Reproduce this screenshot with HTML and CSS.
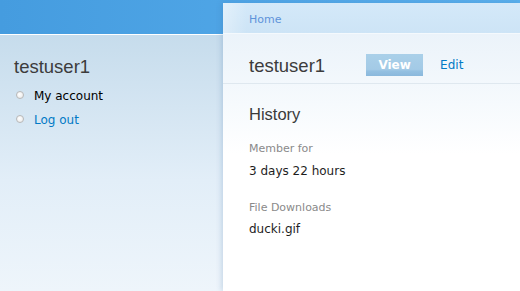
FILE: index.html
```html
<!DOCTYPE html>
<html>
<head>
<meta charset="utf-8">
<link rel="stylesheet" href="styles.css">
</head>
<body>
<div class="page">
  <aside class="sidebar">
    <h2 class="block-title">testuser1</h2>
    <ul class="menu">
      <li class="menu-item">My account</li>
      <li class="menu-item"><a class="link" href="#">Log out</a></li>
    </ul>
  </aside>
  <main class="panel">
    <div class="breadcrumb"><a class="crumb" href="#">Home</a></div>
    <div class="content">
      <div class="title-row">
        <h1 class="page-title">testuser1</h1>
        <nav class="tabs">
          <a class="tab tab-active" href="#">View</a>
          <a class="tab" href="#">Edit</a>
        </nav>
      </div>
      <div class="profile">
        <h3 class="section-title">History</h3>
        <div class="label label-first">Member for</div>
        <div class="value">3 days 22 hours</div>
        <div class="label">File Downloads</div>
        <div class="value value-last">ducki.gif</div>
      </div>
    </div>
  </main>
</div>
</body>
</html>
```

FILE: styles.css
```css
* { box-sizing: border-box; }
html, body { margin: 0; padding: 0; }
body {
  font-family: "DejaVu Sans", Verdana, sans-serif;
  font-size: 12px;
  color: #1a1a1a;
  background: #eef5fb;
}
a { text-decoration: none; }

.page {
  display: grid;
  grid-template-columns: 223px 1fr;
  min-height: 291px;
  background:
    linear-gradient(90deg, #459cdf 0%, #52a8e8 60%, #59afec 100%) 0 0 / 100% 34px no-repeat,
    linear-gradient(#ffffff, #ffffff) 0 34px / 100% 1px no-repeat,
    linear-gradient(180deg, #c4daeb 0px, #c6dcec 35px, #e2eef8 180px, #eef5fb 291px);
}

.sidebar {
  padding: 56px 0 0 14px;
}
.block-title {
  margin: 0;
  font-family: "Liberation Sans", Arial, sans-serif;
  font-weight: normal;
  font-size: 18.5px;
  line-height: 22px;
  color: #3c3c3c;
}
.menu {
  list-style: none;
  margin: 6px 0 0 0;
  padding: 0;
}
.menu-item {
  display: flex;
  align-items: center;
  line-height: 24px;
  padding-left: 2px;
}
.menu-item::before {
  content: "";
  width: 6px;
  height: 6px;
  border-radius: 50%;
  border: 1px solid #b8b8b8;
  background: radial-gradient(circle at 40% 40%, #ffffff 0, #eeeeee 70%);
  margin-right: 10px;
  margin-top: -3px;
}
.menu-item:first-child { color: #000; }
.link { color: #027ac6; }

.panel {
  margin-top: 3px;
  display: flex;
  flex-direction: column;
  box-shadow: -2px 0 5px rgba(60, 110, 160, 0.2);
  background: #fff;
}
.breadcrumb {
  height: 31px;
  padding: 3px 0 0 26px;
  display: flex;
  align-items: center;
  background:
    linear-gradient(90deg, rgba(255,255,255,0.35) 0, rgba(255,255,255,0) 24px),
    linear-gradient(180deg, #d4e9f9, #cde4f6);
  border-bottom: 1px solid #f4f9fd;
}
.crumb {
  font-size: 11px;
  color: #5f94da;
}
.content {
  flex: 1;
  background: linear-gradient(180deg, #ebf3fa 0, #f6fafd 70px, #ffffff 120px);
}
.title-row {
  height: 50px;
  padding: 20px 0 0 26px;
  display: flex;
  align-items: flex-start;
  border-bottom: 1px solid #dfe8ef;
}
.page-title {
  margin: 1px 0 0 0;
  font-family: "Liberation Sans", Arial, sans-serif;
  font-weight: normal;
  font-size: 18.5px;
  line-height: 22px;
  color: #3c3c3c;
}
.tabs {
  display: flex;
  gap: 17px;
  margin-left: 41px;
}
.tab {
  display: block;
  height: 22px;
  line-height: 22px;
  font-size: 12px;
  color: #027ac6;
}
.tab-active {
  width: 57px;
  text-align: center;
  font-weight: bold;
  color: #ffffff;
  background: linear-gradient(180deg, #aad0e9 0, #a3cae6 70%, #93c0e1 78%, #8ab8dc 100%);
}
.profile {
  padding: 20px 0 0 26px;
}
.section-title {
  margin: 0;
  font-family: "Liberation Sans", Arial, sans-serif;
  font-weight: normal;
  font-size: 16.5px;
  line-height: 20px;
  color: #3a3a3a;
}
.label {
  font-size: 11px;
  line-height: 16px;
  color: #8a8a8a;
  margin-top: 20px;
}
.label-first { margin-top: 17px; }
.value {
  font-size: 12px;
  line-height: 18px;
  color: #1e1e1e;
  margin-top: 5px;
}
.value-last { margin-top: 4px; }
```
